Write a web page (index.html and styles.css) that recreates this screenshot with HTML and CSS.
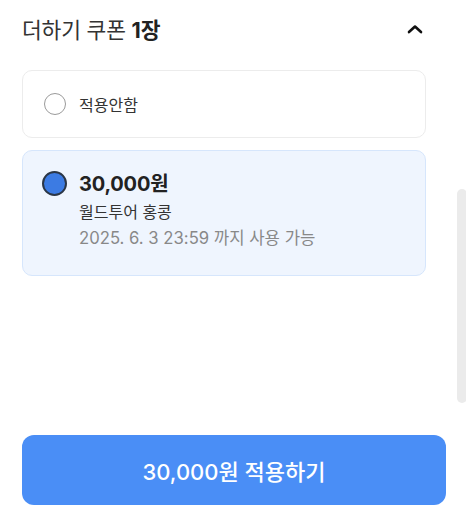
FILE: index.html
```html
<!DOCTYPE html>
<html lang="ko">
<head>
<meta charset="utf-8">
<link rel="stylesheet" href="styles.css">
</head>
<body>
<div class="page">
  <div class="header">
    <div class="title">더하기 쿠폰 <b>1장</b></div>
    <svg class="chev" width="16" height="10" viewBox="0 0 16 10"><path d="M2 8 L8 2.5 L14 8" fill="none" stroke="#111" stroke-width="2.6" stroke-linecap="round" stroke-linejoin="round"/></svg>
  </div>
  <div class="list">
    <div class="card">
      <span class="radio"></span>
      <span class="label">적용안함</span>
    </div>
    <div class="card selected">
      <span class="radio on"></span>
      <div class="info">
        <div class="amount">30,000원</div>
        <div class="name">월드투어 홍콩</div>
        <div class="date">2025. 6. 3 23:59 까지 사용 가능</div>
      </div>
    </div>
  </div>
  <div class="scrollbar"></div>
  <button class="apply">30,000원 적용하기</button>
</div>
</body>
</html>
```
FILE: styles.css
```css
* { box-sizing: border-box; }
html, body { margin: 0; padding: 0; background: #fff; }
body { font-family: "Inter", "Noto Sans CJK KR", sans-serif; color: #333; }
.page { position: relative; width: 466px; height: 519px; padding: 0 20px 0 22px; display: flex; flex-direction: column; }
.header { height: 57px; display: flex; align-items: center; justify-content: space-between; width: 404px; padding-right: 3px; }
.title { font-size: 21.5px; color: #333; letter-spacing: -0.2px; }
.title b { font-weight: 700; color: #222; }
.list { width: 404px; margin-top: 13px; display: flex; flex-direction: column; gap: 12px; }
.card { border: 1.5px solid #ececec; border-radius: 10px; display: flex; align-items: center; }
.card:first-child { height: 68px; padding-left: 21px; gap: 13px; }
.radio { width: 22px; height: 22px; border-radius: 50%; border: 1.5px solid #9a9a9a; background: #fff; flex: none; }
.label { font-size: 16px; color: #333; }
.selected { height: 126px; background: #eff5fe; border-color: #d6e6fc; align-items: flex-start; padding: 20px 0 0 19px; gap: 12px; }
.radio.on { width: 25px; height: 25px; border: 2px solid #2b3646; background: #3c7be3; }
.info { display: flex; flex-direction: column; margin-top: -1px; }
.amount { font-size: 20px; font-weight: 700; line-height: 28px; color: #222; letter-spacing: -0.2px; }
.name { font-size: 16px; line-height: 24px; margin-top: 2px; color: #333; }
.date { font-size: 16.7px; line-height: 24px; margin-top: 2px; color: #888; }
.scrollbar { position: absolute; left: 457px; top: 189px; width: 10px; height: 214px; border-radius: 5px; background: #ebebeb; }
.apply { margin-top: auto; margin-bottom: 14px; width: 424px; height: 70px; border: none; border-radius: 12px; background: #4a8ef6; color: #fff; font-family: "Inter", "Noto Sans CJK KR", sans-serif; font-size: 22px; font-weight: 500; }
```
